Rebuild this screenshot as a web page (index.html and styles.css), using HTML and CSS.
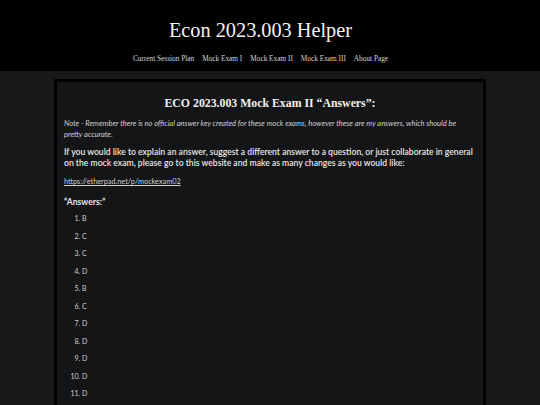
FILE: index.html
```html
<!DOCTYPE html>
<html>
<head>
<meta charset="utf-8">
<link rel="stylesheet" href="styles.css">
</head>
<body>
<header class="site-header">
  <h1 class="site-title">Econ 2023.003 Helper</h1>
  <nav class="site-nav">
    <a href="#">Current Session Plan</a>
    <a href="#">Mock Exam I</a>
    <a href="#">Mock Exam II</a>
    <a href="#">Mock Exam III</a>
    <a href="#">About Page</a>
  </nav>
</header>
<main class="content">
  <h2 class="page-title">ECO 2023.003 Mock Exam II “Answers”:</h2>
  <p class="note">Note - Remember there is no official answer key created for these mock exams, however these are my answers, which should be pretty accurate.</p>
  <p class="lead">If you would like to explain an answer, suggest a different answer to a question, or just collaborate in general on the mock exam, please go to this website and make as many changes as you would like:</p>
  <p class="link-line"><a href="#">https://etherpad.net/p/mockexam02</a></p>
  <p class="answers-label">“Answers:”</p>
  <ol class="answers">
    <li>B</li>
    <li>C</li>
    <li>C</li>
    <li>D</li>
    <li>B</li>
    <li>C</li>
    <li>D</li>
    <li>D</li>
    <li>D</li>
    <li>D</li>
    <li>D</li>
  </ol>
</main>
</body>
</html>
```

FILE: styles.css
```css
html, body {
  margin: 0;
  padding: 0;
  background: #17181a;
}
body {
  font-family: Lato, "DejaVu Sans", sans-serif;
  color: #d8d8d8;
  height: 405px;
  overflow: hidden;
}
.site-header {
  background: #000;
  height: 71px;
  text-align: center;
  padding: 17px 19px 0 0;
  box-sizing: border-box;
}
.site-title {
  margin: 0;
  font-family: "Liberation Serif", serif;
  font-weight: normal;
  font-size: 20.3px;
  line-height: 26px;
  color: #f2f2f2;
}
.site-nav {
  margin-top: 11px;
  display: flex;
  justify-content: center;
  gap: 8px;
  font-family: "Liberation Serif", serif;
  font-size: 7.3px;
  line-height: 10px;
}
.site-nav a {
  color: #d6d6d6;
  text-decoration: none;
}
.content {
  margin: 8px 0 0 54px;
  border: 3px solid #000;
  border-bottom: none;
  background: #141517;
  padding: 14px 7px 0 7px;
  box-sizing: border-box;
  width: 432px;
  height: 330px;
  overflow: hidden;
}
.page-title {
  margin: 0 0 8px 0;
  text-align: center;
  font-family: "Liberation Serif", serif;
  font-weight: bold;
  font-size: 11.8px;
  line-height: 14px;
  color: #f0f0f0;
}
.note {
  margin: 0 0 7px 0;
  font-style: italic;
  font-size: 7.5px;
  line-height: 11px;
  color: #cfcfcf;
}
.lead {
  margin: 0 0 8px 0;
  font-size: 8.6px;
  font-weight: 600;
  line-height: 11px;
  color: #e6e6e6;
}
.link-line {
  margin: 0 0 9px 0;
  font-size: 7.3px;
  line-height: 10px;
}
.link-line a {
  color: #cfcfcf;
}
.answers-label {
  margin: 0 0 2px 0;
  font-size: 8.6px;
  font-weight: bold;
  line-height: 12px;
  color: #e6e6e6;
}
.answers {
  margin: 0;
  padding-left: 18px;
  font-size: 7px;
  line-height: 17.5px;
  color: #d0d0d0;
}
```
